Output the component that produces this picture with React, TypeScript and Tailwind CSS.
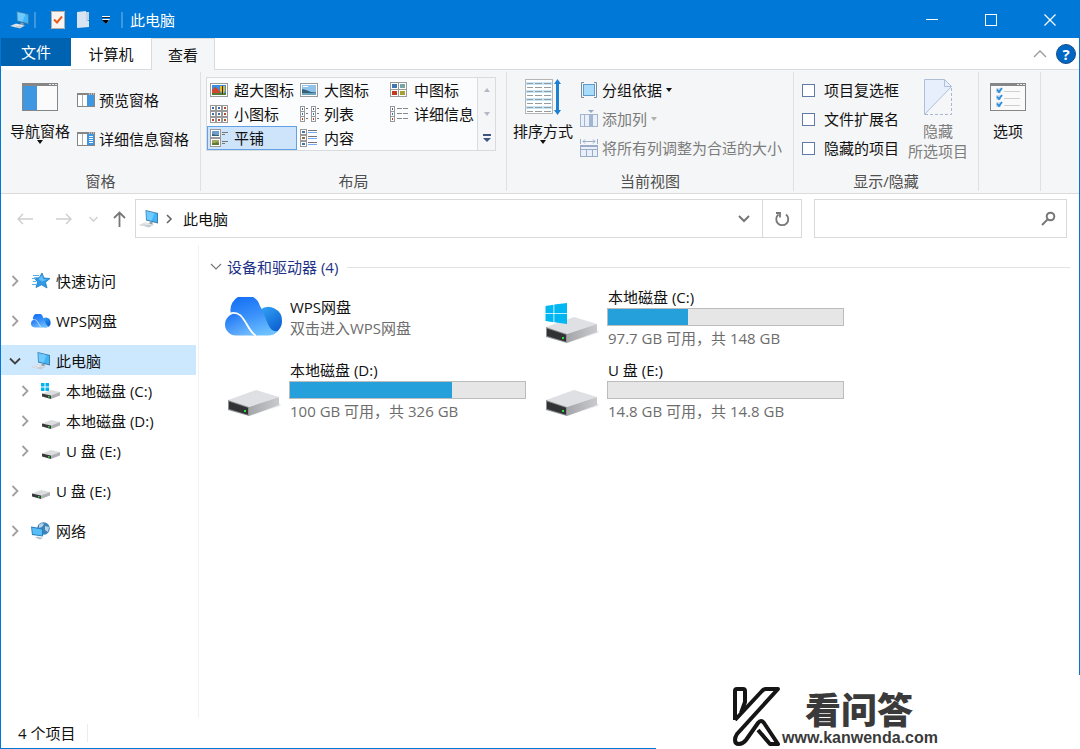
import React from 'react';
import clsx from 'clsx';

/* ---------- small glyphs ---------- */

function Arrow({ up = false, className = '' }: { up?: boolean; className?: string }) {
    return (
        <svg width="6" height="4" viewBox="0 0 6 4" fill="currentColor" className={className}>
            <path d={up ? 'M0 4h6L3 0z' : 'M0 0h6L3 4z'} />
        </svg>
    );
}

function Chevron({ open = false }: { open?: boolean }) {
    return (
        <svg width="12" height="12" viewBox="0 0 12 12" fill="none" strokeWidth="1.8" stroke={open ? '#404040' : '#a0a0a0'}>
            <path d={open ? 'M1 3.5l5 5 5-5' : 'M3.5 1l5 5-5 5'} />
        </svg>
    );
}

/* ---------- shell icons ---------- */

function PcIcon() {
    return (
        <svg width="20" height="18" viewBox="0 0 20 18">
            <path d="M6.500 0l12.500 3v10.500L7 10.500z" fill="#3f7fae" />
            <path d="M7.500 1.200l10.500 2.500v8.500L7.800 9.600z" fill="#42b4f8" />
            <path d="M7.500 1.200l8 1.900-3 7.700-4.700-1.200z" fill="#6fcbff" />
            <path d="M11 11.800l3 .8-1 1.800-3-.5z" fill="#8b9aa6" />
            <path d="M0 15l6-2.500 9 2-5 3z" fill="#c5ccd3" />
            <path d="M2 15l4-1.600 6.500 1.400M4 15.800l5-1.800" stroke="#f2f4f6" strokeWidth=".7" fill="none" />
        </svg>
    );
}

function StarIcon() {
    return (
        <svg width="20" height="18" viewBox="0 0 20 18">
            <path d="M11 1l2 5 6 .5-4.500 3.800L16 16l-5.500-3.200L5 15.500l1.600-5.600L3 6l5.200-.2z" fill="#2f9be8" stroke="#1878c0" strokeWidth=".8" />
            <path d="M11 3l1.300 4 4 .5-5.300 2-3.500-2.500z" fill="#63bdf7" />
            <path d="M2 3.500h6M1 6.500h4M2 9.500h3M1 12.500h4" stroke="#5aaee8" strokeWidth="1" />
        </svg>
    );
}

function CloudIcon({ big = false }: { big?: boolean }) {
    const id = big ? 'cloud-big' : 'cloud-small';
    return (
        <svg width={big ? 58 : 20} height={big ? 40 : 14} viewBox="0 0 58 40">
            <defs>
                <linearGradient id={id + '-back'} x1="0" y1="0" x2=".6" y2="1">
                    <stop offset="0" stopColor="#34a5f6" />
                    <stop offset="1" stopColor="#0a5fd0" />
                </linearGradient>
                <linearGradient id={id + '-mid'} x1=".3" y1="0" x2=".7" y2="1">
                    <stop offset="0" stopColor="#1670f5" />
                    <stop offset=".5" stopColor="#3b92fa" />
                    <stop offset="1" stopColor="#6fc2ff" />
                </linearGradient>
                <linearGradient id={id + '-front'} x1="0" y1="0" x2=".7" y2="1">
                    <stop offset="0" stopColor="#1670f5" />
                    <stop offset="1" stopColor="#6fbaff" />
                </linearGradient>
            </defs>
            <path d="M35 13A13.500 13.500 0 0 1 57 24a14 14 0 0 1-13 14h-6z" fill={`url(#${id}-back)`} />
            <path d="M6 17A15 15 0 0 1 35 9c6 9 8 28 18 25-3 3-6 4.500-10 4.500H28L16 17z" fill={`url(#${id}-mid)`} />
            <path d="M11 38.500a11 11 0 0 1 0-22c11-1.500 12 15 21 22z" fill={`url(#${id}-front)`} />
            <path d="M5 16.500c15-4 15 15 26 22.500" fill="none" stroke="#fff" strokeWidth="1.800" />
        </svg>
    );
}

function WinLogo() {
    return (
        <g fill="#00b7f1">
            <path d="M2.500 19l8-1.200v8.200h-8zM11.300 17.600L24 16v10H11.300z" />
            <path d="M2.500 26.800h8v8.400l-8-1.300zM11.300 26.800H24V37l-12.700-1.700z" />
        </g>
    );
}

function DriveIcon({ windows = false }: { windows?: boolean }) {
    return (
        <svg width="58" height="60" viewBox="0 0 58 60">
            <defs>
                <linearGradient id="drive-side" x1="0" x2="1">
                    <stop offset="0" stopColor="#a4a6a9" />
                    <stop offset="1" stopColor="#c9cacd" />
                </linearGradient>
            </defs>
            <path d="M24 56l31-10 1-1-2-2z" fill="#e9e9e9" />
            <path d="M3 40l28-10 23 7-30 10z" fill="#dfe0e3" />
            <path d="M24 47l30-10v8L24 56z" fill="url(#drive-side)" />
            <path d="M3 40l21 7v9L3 50z" fill="#8d8f92" />
            <path d="M4 41.500l19 6.300v7L4 49z" fill="#303234" />
            <rect x="19" y="50" width="2" height="2" fill="#2fdc3a" />
            {windows && <WinLogo />}
        </svg>
    );
}

function SmallDriveIcon({ windows = false }: { windows?: boolean }) {
    return (
        <svg width="20" height="18" viewBox="0 0 20 18">
            <path d="M1 11.500L10 8l9 2-9 3.500z" fill="#dcdddf" />
            <path d="M10 13.500l9-3.500v3.500L10 17z" fill="#aeb0b3" />
            <path d="M1 11.500l9 2V17l-9-2.500z" fill="#38393b" />
            <rect x="7" y="14" width="1.500" height="1.500" fill="#2fdc3a" />
            {windows && <path d="M0 1h3.500v3.500H0zM4.500 1H8v3.500H4.500zM0 5.500h3.500V9H0zM4.500 5.500H8V9H4.500z" fill="#00b2ee" />}
        </svg>
    );
}

function NetworkIcon() {
    return (
        <svg width="20" height="18" viewBox="0 0 20 18">
            <circle cx="12.500" cy="6.500" r="6.300" fill="#3e83b8" />
            <path d="M8 3c2-2 4-2 5-1l-2 3-3 1zM14 4l4 1-1 5-3-2z" fill="#b5d4e8" />
            <path d="M0 4.500l12 2v8L1 13z" fill="#2a7fc0" />
            <path d="M1 5.700l10 1.700v6L1.800 12z" fill="#56bdf7" />
            <path d="M4 15.500l3-1 5 1.500-3 1.500z" fill="#b7c3cd" />
        </svg>
    );
}

/* ---------- ribbon icons ---------- */

function PaneIcon() {
    return (
        <svg width="36" height="28" viewBox="0 0 36 28">
            <rect x=".5" y=".5" width="35" height="27" fill="#fbfbfb" stroke="#868686" />
            <path d="M0 0h36v3H0z" fill="#868686" />
            <path d="M27 1h2v1h-2zM30 1h2v1h-2zM33 1h2v1h-2z" fill="#e8e8e8" />
            <path d="M1 3h14v24H1z" fill="#3f97e2" />
        </svg>
    );
}

function SmallPaneIcon({ lines = false }: { lines?: boolean }) {
    return (
        <svg width="18" height="14" viewBox="0 0 18 14">
            <rect x=".5" y=".5" width="17" height="13" fill="#fff" stroke="#868686" />
            <path d="M0 0h18v2H0z" fill="#868686" />
            <path d="M12 .5h1v1h-1zM14 .5h1v1h-1zM16 .5h1v1h-1z" fill="#eee" />
            <path d="M5.500 2v11" stroke="#b0b0b0" />
            <path d="M10 2h7v11h-7z" fill="#3f97e2" />
            {lines && <path d="M12 4.500h4M12 6.500h4M12 8.500h4M12 10.500h4" stroke="#fff" />}
        </svg>
    );
}

function Thumb({ x, y, w, h, color = '#3d76b5' }: { x: number; y: number; w: number; h: number; color?: string }) {
    return (
        <g>
            <rect x={x + 0.5} y={y + 0.5} width={w - 1} height={h - 1} fill="#fff" stroke="#999" />
            <rect x={x + 2} y={y + 2} width={w - 4} height={h - 4} fill={color} />
        </g>
    );
}

const viewIcons: Record<string, React.ReactNode> = {
    xlarge: (
        <>
            <Thumb x={0} y={2} w={18} h={14} color="#3a8de0" />
            <path d="M2 9l3-3 3 2 2 3v3H2z" fill="#d5452c" />
            <path d="M2 12h14v2H2z" fill="#4f7c36" />
            <path d="M10 5h5v5l-2 3-3-3z" fill="#e6b91e" />
            <path d="M12 5h1v8h-1z" fill="#33291c" />
        </>
    ),
    large: (
        <>
            <Thumb x={0} y={2} w={18} h={14} color="#8fc3ea" />
            <path d="M2 8l4 1 5 2 5 .5V14H2z" fill="#33607a" />
            <path d="M2 12h14v2H2z" fill="#6fa2bd" />
            <path d="M3 5h5v1H3z" fill="#fff" />
        </>
    ),
    medium: (
        <>
            <Thumb x={0} y={1} w={9} h={8} />
            <Thumb x={8} y={1} w={9} h={8} color="#76a7a5" />
            <Thumb x={0} y={8} w={9} h={8} color="#c33a20" />
            <Thumb x={8} y={8} w={9} h={8} color="#a5a233" />
        </>
    ),
    small: (
        <>
            {[0, 6, 12].map((y) =>
                [0, 6, 12].map((x) => (
                    <Thumb key={x + '-' + y} x={x} y={y} w={6} h={6} color={y === 12 || x === 12 ? '#b5472e' : '#3d6ea8'} />
                ))
            )}
        </>
    ),
    list: (
        <>
            {[0, 11].map((x) =>
                [1, 6, 11].map((y) => (
                    <g key={x + '-' + y}>
                        <Thumb x={x} y={y} w={5} h={6} color={y === 11 ? '#c33a20' : '#3d6ea8'} />
                        <path d={`M${x + 6} ${y + 2.5}h2`} stroke="#777" />
                    </g>
                ))
            )}
        </>
    ),
    details: (
        <>
            {[1, 6, 11].map((y) => (
                <g key={y}>
                    <Thumb x={0} y={y} w={5} h={6} color={y === 11 ? '#c33a20' : '#3d6ea8'} />
                    <path d={`M7 ${y + 2.5}h5M13 ${y + 2.5}h5`} stroke="#888" />
                </g>
            ))}
        </>
    ),
    tiles: (
        <>
            <Thumb x={0} y={0} w={11} h={9} color="#6f9fc8" />
            <Thumb x={0} y={9} w={11} h={9} color="#a0a860" />
            <path d="M2 5l4 1 3 0v1H2z" fill="#33607a" />
            <path d="M2 14h3l2-1 2 1v2H2z" fill="#5d7a35" />
            <path d="M12 3.500h6M12 5.500h3M12 12.500h6M12 14.500h3" stroke="#777" />
        </>
    ),
    content: (
        <>
            <Thumb x={0} y={0} w={7} h={6} />
            <Thumb x={0} y={6} w={7} h={6} color="#87723b" />
            <Thumb x={0} y={12} w={7} h={6} color="#3f76a5" />
            <path d="M8 1.500h9M8 7.500h9M8 13.500h9" stroke="#777" />
            <path d="M8 3.500h9M8 9.500h9M8 15.500h9" stroke="#79a9f5" />
        </>
    ),
};

function SortIcon() {
    return (
        <svg width="36" height="36" viewBox="0 0 36 36">
            <rect x=".5" y=".5" width="27" height="34" fill="#fff" stroke="#b5b5b5" />
            <path d="M1 3h26v3H1zM1 11h26v3H1zM1 19h26v3H1zM1 27h26v3H1z" fill="#c5e5f5" />
            {[4.5, 8.5, 12.5, 16.5, 20.5, 24.5, 28.5, 32.5].map((y) => (
                <path key={y} d={`M2 ${y}h6M10 ${y}h7M19 ${y}h7`} stroke="#929ca3" />
            ))}
            <path d="M32.500 3v30" stroke="#1f80cf" strokeWidth="3" />
            <path d="M29 5l3.500-5L36 5zM29 31l3.500 5 3.500-5z" fill="#1f80cf" />
        </svg>
    );
}

function GroupByIcon() {
    return (
        <svg width="18" height="18" viewBox="0 0 18 18" fill="none">
            <path d="M4 1.500H1.500v15H4M14 1.500h2.500v15H14" stroke="#7c8a99" />
            <rect x="3.500" y="3.500" width="11" height="11" fill="#a9dbfa" stroke="#5f9ccc" />
        </svg>
    );
}

function AddColumnIcon() {
    return (
        <svg width="18" height="18" viewBox="0 0 18 18">
            <path d="M8 0h6l-3 3z" fill="#94a9c8" />
            <rect x=".5" y="4.500" width="17" height="12" fill="#e9f0fa" stroke="#a3b4cf" />
            <path d="M9 5h4v11H9z" fill="#a3b4cf" />
            <path d="M4.500 5v11" stroke="#a3b4cf" />
        </svg>
    );
}

function FitColumnsIcon() {
    return (
        <svg width="18" height="18" viewBox="0 0 18 18" fill="none" stroke="#9aacc8">
            <path d="M.5 0v5M17.500 0v5M3 2.500h12M5 .5l-2 2 2 2M13 .5l2 2-2 2" />
            <rect x=".5" y="6.500" width="17" height="11" fill="#e9f0fa" />
            <path d="M1 10.500h16M6.500 10v7M12.500 10v7M1 7.500h16" />
        </svg>
    );
}

function HideIcon() {
    return (
        <svg width="28" height="36" viewBox="0 0 28 36" fill="none">
            <path d="M.5.500h20l7 7L.5 35.500z" fill="#e6effb" />
            <path d="M.5 35.500V.5h20l7 7L.5 35.500M20.500.500v7h7" stroke="#b0bfd8" />
            <path d="M27.500 9v26.500H1" stroke="#a9b8cf" strokeDasharray="3 2" />
        </svg>
    );
}

function OptionsIcon() {
    return (
        <svg width="36" height="28" viewBox="0 0 36 28" fill="none">
            <rect x=".5" y=".5" width="35" height="27" fill="#fafafa" stroke="#868686" />
            <path d="M0 0h36v3H0z" fill="#868686" />
            <path d="M27 1h2v1h-2zM30 1h2v1h-2zM33 1h2v1h-2z" fill="#e8e8e8" />
            {[5, 12, 19].map((y) => (
                <g key={y}>
                    <rect x="6" y={y} width="5" height="5" fill="#d5dce2" />
                    <path d={`M7 ${y + 1.5}l2 2.500 3-4`} stroke="#2590df" strokeWidth="1.800" />
                    <path d={`M14 ${y + 3.5}h16`} stroke="#cfcfcf" />
                </g>
            ))}
        </svg>
    );
}

/* ---------- title bar and tabs ---------- */

function TitleBar() {
    return (
        <header className="flex h-[37px] items-center bg-[#0078d7] pl-[9px] text-white">
            <PcIcon />
            <span className="ml-1 h-4 w-[2px] bg-[#3f97dc]" />
            <button type="button" aria-label="属性" className="ml-[15px]">
                <svg width="14" height="18" viewBox="0 0 14 18">
                    <path d="M0 0h14v18H0z" fill="#f7f5f3" />
                    <path d="M.5.5h13v17H.5z" fill="none" stroke="#b4aca6" />
                    <path d="M3 8.500l3 3 5-6" fill="none" stroke="#ea5b17" strokeWidth="2" />
                </svg>
            </button>
            <button type="button" aria-label="新建文件夹" className="ml-3">
                <svg width="13" height="18" viewBox="0 0 13 18">
                    <path d="M0 1l9-1v9l3 1v6l-12 1z" fill="#d9e4f2" />
                    <path d="M9 1h3v8l-3 1z" fill="#c3d3e8" />
                </svg>
            </button>
            <button type="button" aria-label="自定义快速访问工具栏" className="ml-3">
                <svg width="8" height="8" viewBox="0 0 8 8">
                    <path d="M0 0h8v1H0z" fill="#fff" />
                    <path d="M0 1h8v1H0z" fill="#123" />
                    <path d="M0 3h8L4 8z" fill="#fff" />
                    <path d="M0 4h7L4 8z" fill="#000" />
                </svg>
            </button>
            <span className="ml-[11px] h-4 w-[2px] bg-[#3f97dc]" />
            <h1 className="ml-[7px]">此电脑</h1>
            <div className="ml-auto flex h-full">
                <button type="button" aria-label="最小化" className="flex w-[59px] items-center justify-center">
                    <svg width="12" height="12" stroke="#fff"><path d="M0 5.500h12" /></svg>
                </button>
                <button type="button" aria-label="最大化" className="flex w-[59px] items-center justify-center">
                    <svg width="12" height="12" stroke="#fff" fill="none"><rect x=".5" y=".5" width="11" height="11" /></svg>
                </button>
                <button type="button" aria-label="关闭" className="flex w-[59px] items-center justify-center">
                    <svg width="12" height="12" stroke="#fff" strokeWidth="1.200"><path d="M.5.500l11 11M11.500.500l-11 11" /></svg>
                </button>
            </div>
        </header>
    );
}

function Tabs() {
    return (
        <nav className="flex h-8 bg-white">
            <button type="button" className="mb-1 w-[70px] bg-[#0063b1] text-white">文件</button>
            <button type="button" className="w-20 border-b border-[#dadbdc]">计算机</button>
            <button type="button" className="w-16 border-x border-t border-[#dadbdc] bg-[#f5f6f7]">查看</button>
            <div className="flex flex-1 items-center justify-end gap-[9px] border-b border-[#dadbdc] pr-[3px]">
                <button type="button" aria-label="最小化功能区">
                    <svg width="14" height="8" viewBox="0 0 14 8" fill="none" stroke="#9a9a9a" strokeWidth="1.300"><path d="M1 7l6-6 6 6" /></svg>
                </button>
                <button type="button" aria-label="帮助" className="flex size-5 items-center justify-center rounded-full border border-[#1b4f86] bg-[#0067c5] text-[15px] leading-5 font-bold text-white">?</button>
            </div>
        </nav>
    );
}

/* ---------- ribbon ---------- */

function Group({ label, width, pad, children }: { label?: string; width: string; pad: string; children: React.ReactNode }) {
    return (
        <section className={clsx('flex shrink-0 flex-col border-r border-[#dfe0e1]', width)}>
            <div className={clsx('flex flex-1 items-start', pad)}>{children}</div>
            <div className="h-5 text-center text-[#4f4f4f]">{label}</div>
        </section>
    );
}

function BigButton({ icon, text, arrow = false, disabled = false }: { icon: React.ReactNode; text: React.ReactNode; arrow?: boolean; disabled?: boolean }) {
    return (
        <button type="button" disabled={disabled} className="mt-[7px] flex min-w-[36px] shrink-0 flex-col items-center disabled:text-[#7c7c7c]">
            <span className="flex h-9 items-center">{icon}</span>
            <span className="mt-[6px] block">{text}</span>
            {arrow && <Arrow className="-mt-px" />}
        </button>
    );
}

function LineButton({ icon, text, arrow = false, disabled = false }: { icon: React.ReactNode; text: string; arrow?: boolean; disabled?: boolean }) {
    return (
        <button type="button" disabled={disabled} className="flex h-5 items-center gap-1 whitespace-nowrap disabled:text-[#7c7c7c]">
            {icon}
            <span>{text}</span>
            {arrow && <Arrow className={disabled ? 'text-[#b0b0b0]' : ''} />}
        </button>
    );
}

const views = [
    { icon: 'xlarge', label: '超大图标' },
    { icon: 'large', label: '大图标' },
    { icon: 'medium', label: '中图标' },
    { icon: 'small', label: '小图标' },
    { icon: 'list', label: '列表' },
    { icon: 'details', label: '详细信息' },
    { icon: 'tiles', label: '平铺' },
    { icon: 'content', label: '内容' },
];

function ViewGallery() {
    const [view, setView] = React.useState('tiles');

    return (
        <div className="mt-[5px] flex border border-[#dadbdc] bg-[#fbfcfd]">
            <div className="grid grid-cols-[90px_90px_90px]">
                {views.map((v) => (
                    <button
                        key={v.icon}
                        type="button"
                        onClick={() => setView(v.icon)}
                        className={clsx(
                            'flex h-6 items-center gap-[5px] border pl-[2px] whitespace-nowrap',
                            view === v.icon ? 'border-[#62a2e4] bg-[#cde4fa]' : 'border-transparent'
                        )}
                    >
                        <svg width="19" height="18" viewBox="0 0 19 18" className="shrink-0">{viewIcons[v.icon]}</svg>
                        {v.label}
                    </button>
                ))}
            </div>
            <div className="flex w-[18px] flex-col border-l border-[#dadbdc] bg-[#f5f6f7] text-[#b3bac4]">
                <button type="button" aria-label="向上" className="flex flex-1 items-center justify-center"><Arrow up /></button>
                <button type="button" aria-label="向下" className="flex flex-1 items-center justify-center"><Arrow /></button>
                <button type="button" aria-label="更多" className="flex flex-1 items-center justify-center">
                    <svg width="8" height="8" viewBox="0 0 8 8" fill="#3d5580"><path d="M0 0h8v2H0zM0 4h8L4 8z" /></svg>
                </button>
            </div>
        </div>
    );
}

function Ribbon() {
    return (
        <div className="flex h-[124px] border-b border-[#dadbdc] bg-[#f5f6f7] pt-[2px] pb-[2px]">
            <Group label="窗格" width="w-[200px]" pad="pl-[9px]">
                <BigButton icon={<PaneIcon />} text="导航窗格" arrow />
                <div className="mt-[18px] ml-[7px] flex flex-col gap-[19px]">
                    <LineButton icon={<SmallPaneIcon />} text="预览窗格" />
                    <LineButton icon={<SmallPaneIcon lines />} text="详细信息窗格" />
                </div>
            </Group>
            <Group label="布局" width="w-[306px]" pad="pl-[5px]">
                <ViewGallery />
            </Group>
            <Group label="当前视图" width="w-[287px]" pad="pl-[6px]">
                <BigButton icon={<SortIcon />} text="排序方式" arrow />
                <div className="mt-2 ml-[7px] flex flex-col gap-[9px]">
                    <LineButton icon={<GroupByIcon />} text="分组依据" arrow />
                    <LineButton icon={<AddColumnIcon />} text="添加列" arrow disabled />
                    <LineButton icon={<FitColumnsIcon />} text="将所有列调整为合适的大小" disabled />
                </div>
            </Group>
            <Group label="显示/隐藏" width="w-[185px]" pad="pl-2">
                <div className="mt-2 flex flex-col gap-[9px]">
                    {['项目复选框', '文件扩展名', '隐藏的项目'].map((t) => (
                        <label key={t} className="flex h-5 items-center gap-[9px] whitespace-nowrap">
                            <input type="checkbox" className="size-[13px] appearance-none border border-[#5f7ba5] bg-white checked:bg-[#5f7ba5]" />
                            {t}
                        </label>
                    ))}
                </div>
                <div className="ml-[9px]">
                    <BigButton icon={<HideIcon />} text={<>隐藏<br />所选项目</>} disabled />
                </div>
            </Group>
            <Group width="w-[62px]" pad="pl-[11px]">
                <BigButton icon={<OptionsIcon />} text="选项" />
            </Group>
        </div>
    );
}

/* ---------- address bar ---------- */

function AddressBar() {
    return (
        <div className="flex h-[51px] items-start pt-[5px] pr-3">
            <div className="flex h-[39px] w-[134px] shrink-0 items-center pl-4 text-[#d0d0d0]">
                <button type="button" aria-label="后退">
                    <svg width="16" height="12" viewBox="0 0 16 12" fill="none" stroke="currentColor" strokeWidth="1.500"><path d="M16 6H1M6 1L1 6l5 5" /></svg>
                </button>
                <button type="button" aria-label="前进" className="ml-[23px]">
                    <svg width="16" height="12" viewBox="0 0 16 12" fill="none" stroke="currentColor" strokeWidth="1.500"><path d="M0 6h15M10 1l5 5-5 5" /></svg>
                </button>
                <button type="button" aria-label="最近浏览的位置" className="ml-[17px]">
                    <svg width="9" height="6" viewBox="0 0 9 6" fill="none" stroke="currentColor" strokeWidth="1.500"><path d="M.5 1l4 4 4-4" /></svg>
                </button>
                <button type="button" aria-label="上移" className="ml-[15px]">
                    <svg width="13" height="16" viewBox="0 0 13 16" fill="none" stroke="#777" strokeWidth="1.800"><path d="M6.500 16V1.500M1 7l5.500-5.500L12 7" /></svg>
                </button>
            </div>
            <div className="flex h-[39px] flex-1 border border-[#d9d9d9]">
                <div className="flex flex-1 items-center pl-[3px]">
                    <PcIcon />
                    <svg width="8" height="10" viewBox="0 0 8 10" fill="none" stroke="#666" strokeWidth="1.600" className="ml-[6px]"><path d="M2 1l4 4-4 4" /></svg>
                    <button type="button" className="ml-[10px]">此电脑</button>
                </div>
                <button type="button" aria-label="上一个位置" className="flex w-[38px] items-center justify-center border-r border-[#d9d9d9]">
                    <svg width="12" height="8" viewBox="0 0 12 8" fill="none" stroke="#777" strokeWidth="2"><path d="M1 1l5 5 5-5" /></svg>
                </button>
                <button type="button" aria-label="刷新" className="flex w-[38px] items-center justify-center">
                    <svg width="16" height="16" viewBox="0 0 16 16" fill="none" stroke="#777" strokeWidth="1.800">
                        <path d="M12 3.500a6 6 0 1 1-7.500 0M2 2h4v4.500" />
                    </svg>
                </button>
            </div>
            <div className="ml-3 flex h-[39px] w-[253px] items-center border border-[#d9d9d9] pr-[10px]">
                <input type="text" aria-label="搜索此电脑" className="min-w-0 flex-1 self-stretch px-2 outline-none" />
                <button type="button" aria-label="搜索">
                    <svg width="15" height="15" viewBox="0 0 15 15" fill="none" stroke="#777" strokeWidth="2">
                        <circle cx="9.500" cy="5.500" r="3.800" />
                        <path d="M6.500 8.500L1 14" />
                    </svg>
                </button>
            </div>
        </div>
    );
}

/* ---------- navigation pane ---------- */

function TreeRow({ icon, text, open = false, child = false }: { icon: React.ReactNode; text: string; open?: boolean; child?: boolean }) {
    return (
        <a href="#" className={clsx('mr-[2px] flex h-[30px] items-center pt-[2px]', child ? 'pl-[18px]' : 'pl-2', open && 'bg-[#cce8ff]')}>
            <Chevron open={open} />
            <span className="ml-[10px] flex w-5 justify-center">{icon}</span>
            <span className="ml-[5px]">{text}</span>
        </a>
    );
}

function NavPane() {
    return (
        <aside className="w-[198px] shrink-0 border-r border-[#f2f2f2] pt-5">
            <ul className="flex flex-col gap-[10px]">
                <li><TreeRow icon={<StarIcon />} text="快速访问" /></li>
                <li><TreeRow icon={<CloudIcon />} text="WPS网盘" /></li>
                <li>
                    <TreeRow icon={<PcIcon />} text="此电脑" open />
                    <ul>
                        <li><TreeRow icon={<SmallDriveIcon windows />} text="本地磁盘 (C:)" child /></li>
                        <li><TreeRow icon={<SmallDriveIcon />} text="本地磁盘 (D:)" child /></li>
                        <li><TreeRow icon={<SmallDriveIcon />} text="U 盘 (E:)" child /></li>
                    </ul>
                </li>
                <li><TreeRow icon={<SmallDriveIcon />} text="U 盘 (E:)" /></li>
                <li><TreeRow icon={<NetworkIcon />} text="网络" /></li>
            </ul>
        </aside>
    );
}

/* ---------- content ---------- */

type Drive = { name: string; info: string; used: number; windows?: boolean };

function DriveTile({ name, info, used, windows }: Drive) {
    return (
        <li className="flex h-[61px] gap-[6px]">
            <DriveIcon windows={windows} />
            <div className="w-[237px]">
                <div className="pl-px">{name}</div>
                <div className="mt-px h-[18px] border border-[#bcbcbc] bg-[#e6e6e6]">
                    <div className="h-full bg-[#26a0da]" style={{ width: used + '%' }} />
                </div>
                <div className="mt-[2px] pl-px text-[#6d6d6d]">{info}</div>
            </div>
        </li>
    );
}

function Content() {
    return (
        <main className="min-w-0 flex-1 pt-3">
            <div className="flex h-5 items-center pr-[9px] pl-[11px]">
                <button type="button" className="flex items-center gap-[5px] text-[#1e3287]">
                    <svg width="12" height="8" viewBox="0 0 12 8" fill="none" stroke="#777" strokeWidth="1.200"><path d="M1 1l5 5 5-5" /></svg>
                    设备和驱动器 (4)
                </button>
                <span className="ml-[9px] h-px flex-1 bg-[#e2e2e2]" />
            </div>
            <ul className="mt-[10px] ml-[26px] grid grid-cols-[repeat(auto-fill,318px)] gap-y-3">
                <li className="flex h-[61px] items-start gap-[6px] pt-[10px]">
                    <CloudIcon big />
                    <div className="pl-px">
                        <div>WPS网盘</div>
                        <div className="mt-px text-[#6d6d6d]">双击进入WPS网盘</div>
                    </div>
                </li>
                <DriveTile name="本地磁盘 (C:)" info="97.7 GB 可用，共 148 GB" used={34} windows />
                <DriveTile name="本地磁盘 (D:)" info="100 GB 可用，共 326 GB" used={69} />
                <DriveTile name="U 盘 (E:)" info="14.8 GB 可用，共 14.8 GB" used={0} />
            </ul>
        </main>
    );
}

// sits on top of the window's bottom right corner, frame included
function SiteBadge() {
    return (
        <div className="absolute -right-px -bottom-px flex h-[74px] w-[424px] items-start bg-white pt-[11px] pl-[76px] text-[#3a3a3a]">
            <svg width="49" height="63" viewBox="0 0 49 63" fill="none" stroke="#151515" strokeWidth="4" strokeLinejoin="round" className="shrink-0">
                <path d="M3 34V5q0-2 2-2h6q2 0 2 2v11L9 27" />
                <path d="M3 34L30 5q2-2 4-2h12L5 48q-2 3-2 6 0 4 4 4 4 0 7-4l12-17q3-4 6 0l14 21h-8L26 44" />
            </svg>
            <div className="pt-[2px]">
                <div className="pl-6 font-['Noto_Sans_CJK_SC',sans-serif] text-[36px] leading-10 font-black">看问答</div>
                <div className="pl-px font-['Liberation_Sans',sans-serif] text-[16px] leading-5 font-bold">www.kanwenda.com</div>
            </div>
        </div>
    );
}

function App() {
    return (
        <div className="relative flex min-h-screen flex-col border border-[#0078d7] bg-white font-['Open_Sans','Noto_Sans_CJK_SC',sans-serif] text-[15px] leading-5 text-[#111]">
            <TitleBar />
            <Tabs />
            <Ribbon />
            <AddressBar />
            <div className="flex flex-1">
                <NavPane />
                <Content />
            </div>
            <footer className="flex h-[30px] items-center pl-[17px]">
                <span>4 个项目</span>
                <span className="ml-3 h-[18px] w-px bg-[#ececec]" />
            </footer>
            <SiteBadge />
        </div>
    );
}

export default App;
